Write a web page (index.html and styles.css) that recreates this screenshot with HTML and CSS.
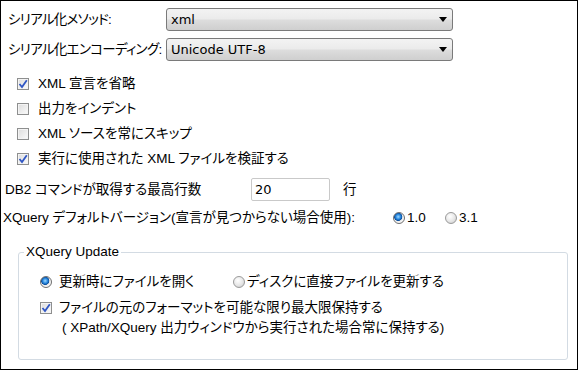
FILE: index.html
```html
<!DOCTYPE html>
<html>

<head>
    <meta charset="utf-8">
    <title>XQuery Options</title>
    <link rel="stylesheet" href="styles.css">
</head>

<body>
    <div class="panel">
        <div class="row row-select">
            <span class="select-label">シリアル化メソッド:</span>
            <div class="combo"><span>xml</span><i class="caret"></i></div>
        </div>
        <div class="row row-select">
            <span class="select-label">シリアル化エンコーディング:</span>
            <div class="combo"><span>Unicode UTF-8</span><i class="caret"></i></div>
        </div>

        <div class="checks">
            <div class="check">
                <span class="box"><svg width="10" height="10" viewBox="0 0 10 10"><path d="M1.5 5 L4 8 L8.8 1.2" fill="none" stroke="#2f56c4" stroke-width="1.8"/></svg></span>
                <span>XML 宣言を省略</span>
            </div>
            <div class="check">
                <span class="box"></span>
                <span>出力をインデント</span>
            </div>
            <div class="check">
                <span class="box"></span>
                <span>XML ソースを常にスキップ</span>
            </div>
            <div class="check">
                <span class="box"><svg width="10" height="10" viewBox="0 0 10 10"><path d="M1.5 5 L4 8 L8.8 1.2" fill="none" stroke="#2f56c4" stroke-width="1.8"/></svg></span>
                <span>実行に使用された XML ファイルを検証する</span>
            </div>
        </div>

        <div class="row row-limit">
            <span class="limit-label">DB2 コマンドが取得する最高行数</span>
            <span class="field">20</span>
            <span class="unit">行</span>
        </div>

        <div class="row row-version">
            <span class="version-label">XQuery デフォルトバージョン(宣言が見つからない場合使用):</span>
            <span class="option option-first"><i class="radio on"></i>1.0</span>
            <span class="option"><i class="radio"></i>3.1</span>
        </div>

        <fieldset class="group">
            <legend>XQuery Update</legend>
            <div class="group-body">
                <div class="row row-update">
                    <span class="option option-open"><i class="radio on"></i>更新時にファイルを開く</span>
                    <span class="option option-disk"><i class="radio"></i>ディスクに直接ファイルを更新する</span>
                </div>
                <div class="check check-keep">
                    <span class="box"><svg width="10" height="10" viewBox="0 0 10 10"><path d="M1.5 5 L4 8 L8.8 1.2" fill="none" stroke="#2f56c4" stroke-width="1.8"/></svg></span>
                    <span>ファイルの元のフォーマットを可能な限り最大限保持する</span>
                </div>
                <div class="note">( XPath/XQuery 出力ウィンドウから実行された場合常に保持する)</div>
            </div>
        </fieldset>
    </div>
</body>

</html>
```

FILE: styles.css
```css
html,
body {
    margin: 0;
    padding: 0;
    background: #ffffff;
}

.panel {
    width: 578px;
    height: 370px;
    box-sizing: border-box;
    border: 1px solid #000000;
    font-family: "Liberation Sans", "Noto Sans CJK JP", sans-serif;
    font-size: 13.5px;
    line-height: 16px;
    font-feature-settings: "palt";
    color: #000000;
    overflow: hidden;
    white-space: nowrap;
}

.row {
    display: flex;
    align-items: center;
}

.row-select {
    margin-top: 7px;
    height: 23px;
    padding-left: 7px;
}

.select-label {
    width: 158px;
    letter-spacing: -0.7px;
}

.combo {
    width: 287px;
    height: 23px;
    box-sizing: border-box;
    border: 1px solid #7a7a7a;
    border-radius: 3px;
    background: linear-gradient(#f3f3f3 0%, #ebebeb 48%, #dddddd 52%, #cfcfcf 100%);
    display: flex;
    align-items: center;
    justify-content: space-between;
    padding: 0 5px 0 4px;
    font-family: "DejaVu Sans", sans-serif;
    font-size: 13px;
}

.caret {
    width: 0;
    height: 0;
    border-left: 4px solid transparent;
    border-right: 4px solid transparent;
    border-top: 5px solid #000000;
}

.checks {
    margin-top: 10px;
    padding-left: 16px;
}

.check {
    display: flex;
    align-items: center;
    height: 25px;
}

.box {
    width: 12px;
    height: 12px;
    box-sizing: border-box;
    border: 1px solid #8e8f8f;
    background: linear-gradient(135deg, #dcdcdc, #fbfbfb);
    box-shadow: inset 0 0 0 1px #f4f4f4;
    margin-right: 9px;
    display: flex;
    align-items: center;
    justify-content: center;
}

.row-limit {
    margin-top: 7px;
    height: 23px;
    padding-left: 4px;
}

.limit-label {
    width: 246px;
}

.field {
    width: 79px;
    height: 23px;
    box-sizing: border-box;
    border: 1px solid #c9c9c9;
    border-radius: 2px;
    padding-left: 3px;
    display: flex;
    align-items: center;
    font-family: "DejaVu Sans", sans-serif;
    font-size: 13px;
}

.unit {
    margin-left: 13px;
}

.row-version {
    margin-top: 7px;
    height: 20px;
    padding-left: 2px;
}

.version-label {
    width: 390px;
}

.option {
    display: flex;
    align-items: center;
}

.option-first {
    width: 52px;
}

.radio {
    width: 12px;
    height: 12px;
    box-sizing: border-box;
    border-radius: 50%;
    border: 1px solid #9a9a9a;
    background: radial-gradient(circle at 40% 35%, #ffffff 0%, #e6e6e6 55%, #c4c4c4 100%);
    margin-right: 2px;
    display: inline-block;
}

.radio.on {
    border-color: #6f6f6f;
    background: radial-gradient(circle at 42% 38%, #9fd8ff 0%, #2a8ae0 28%, #0b4f9e 45%, #ececec 52%, #f7f7f7 70%, #cfcfcf 100%);
}

.group {
    margin: 16px 0 0 17px;
    width: 550px;
    box-sizing: border-box;
    border: 1px solid #d3dbe3;
    border-radius: 3px;
    padding: 0 0 21px 5px;
}

.group legend {
    padding: 0 2px;
    line-height: 16px;
}

.group-body {
    padding-left: 16px;
}

.row-update {
    margin-top: 12px;
    height: 20px;
}

.option-open {
    width: 193px;
}

.option-open .radio {
    margin-right: 7px;
}

.check-keep {
    margin-top: 6px;
    height: 20px;
}

.check-keep .box {
    margin-right: 7px;
}

.note {
    height: 20px;
    line-height: 20px;
    padding-left: 22px;
}
```
